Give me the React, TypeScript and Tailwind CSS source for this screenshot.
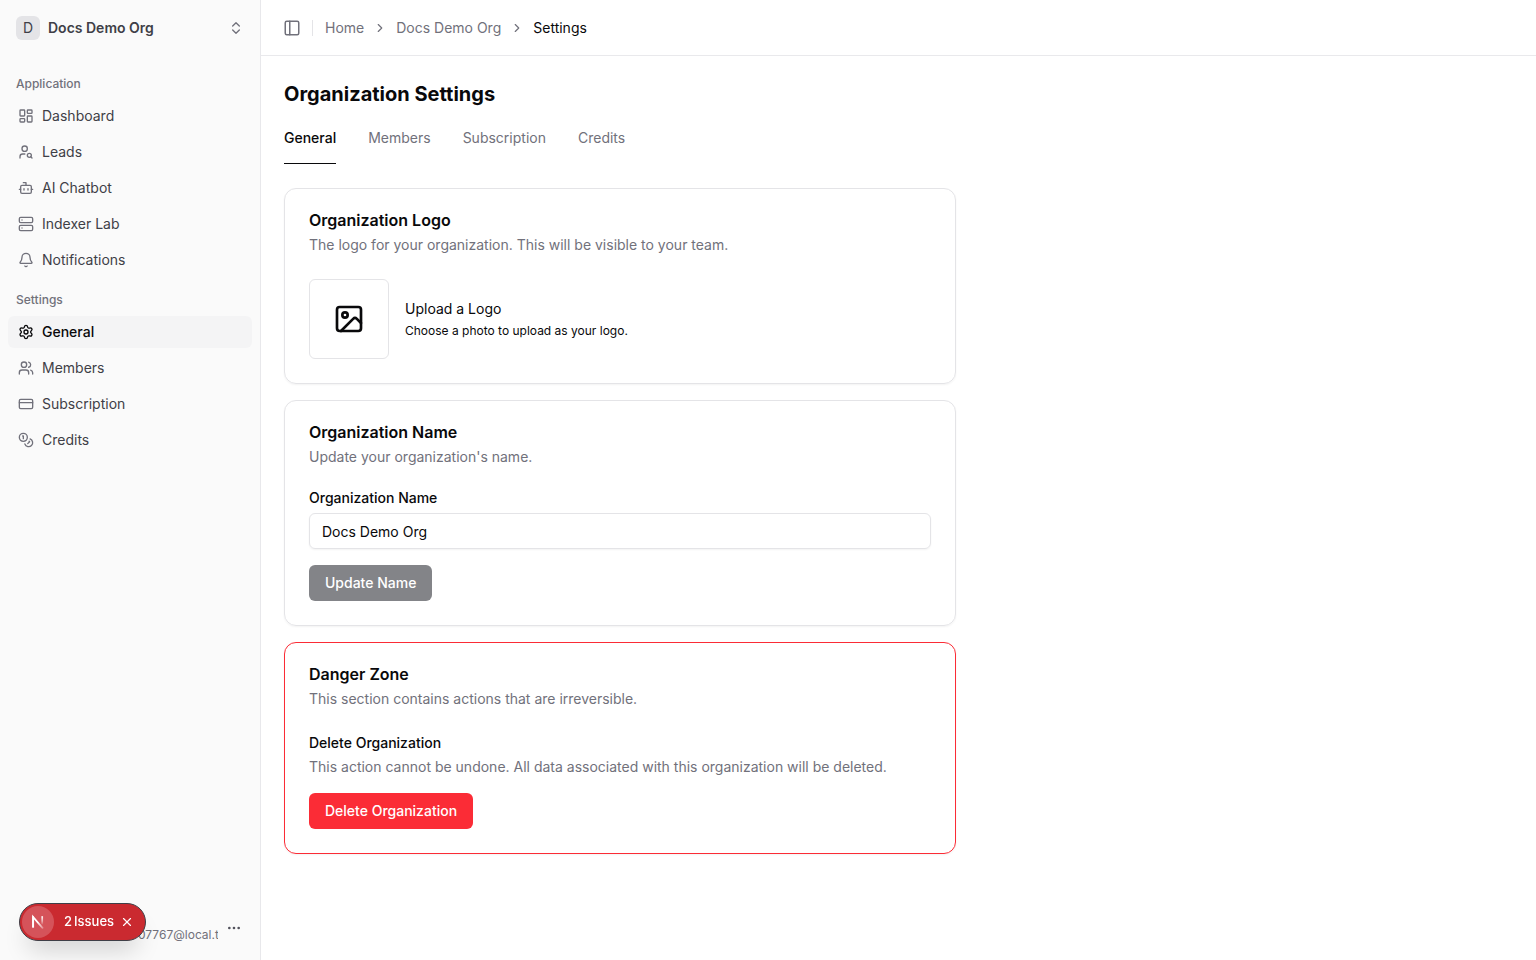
import {
    Bell,
    Bot,
    ChevronRight,
    ChevronsUpDown,
    Coins,
    CreditCard,
    Ellipsis,
    Image,
    LayoutDashboard,
    PanelLeft,
    Server,
    Settings,
    UserSearch,
    Users,
    X,
} from 'lucide-react';
import type { LucideIcon } from 'lucide-react';
import { useState } from 'react';
import type { ReactNode } from 'react';

type MenuItem = { label: string; icon: LucideIcon; active?: boolean };

const applicationItems: MenuItem[] = [
    { label: 'Dashboard', icon: LayoutDashboard },
    { label: 'Leads', icon: UserSearch },
    { label: 'AI Chatbot', icon: Bot },
    { label: 'Indexer Lab', icon: Server },
    { label: 'Notifications', icon: Bell },
];

const settingsItems: MenuItem[] = [
    { label: 'General', icon: Settings, active: true },
    { label: 'Members', icon: Users },
    { label: 'Subscription', icon: CreditCard },
    { label: 'Credits', icon: Coins },
];

const tabs = ['General', 'Members', 'Subscription', 'Credits'];

function MenuGroup({ title, items }: { title: string; items: MenuItem[] }) {
    return (
        <div>
            <div className="flex h-8 items-center px-2 text-xs font-medium text-zinc-500">{title}</div>
            <ul className="flex flex-col gap-1">
                {items.map(({ label, icon: Icon, active }) => (
                    <li key={label}>
                        <a
                            href="#"
                            className={
                                active
                                    ? 'flex h-8 items-center gap-2 rounded-md bg-zinc-100 px-2.5 text-sm font-medium text-zinc-950'
                                    : 'flex h-8 items-center gap-2 rounded-md px-2.5 text-sm text-zinc-700'
                            }
                        >
                            <Icon className={active ? 'size-4' : 'size-4 text-zinc-500'} />
                            <span>{label}</span>
                        </a>
                    </li>
                ))}
            </ul>
        </div>
    );
}

function Sidebar() {
    return (
        <aside className="flex w-[261px] shrink-0 flex-col border-r border-zinc-200/80 bg-[#fafafa]">
            <button type="button" className="flex h-14 items-center gap-2 px-4 text-left">
                <span className="flex size-6 items-center justify-center rounded-md bg-zinc-200 text-sm text-zinc-700">
                    D
                </span>
                <span className="flex-1 text-sm font-semibold text-zinc-700">Docs Demo Org</span>
                <ChevronsUpDown className="size-4 text-zinc-500" />
            </button>

            <nav className="flex flex-1 flex-col gap-2 px-2 pt-3">
                <MenuGroup title="Application" items={applicationItems} />
                <MenuGroup title="Settings" items={settingsItems} />
            </nav>

            <button type="button" aria-label="Account" className="flex h-16 items-center gap-2 px-[18px] text-zinc-600">
                <span className="flex flex-1 justify-end overflow-hidden pt-3.5">
                    <span className="w-20 overflow-hidden text-left text-xs whitespace-nowrap text-zinc-500">
                        07767@local.t
                    </span>
                </span>
                <Ellipsis className="size-4" />
            </button>
        </aside>
    );
}

function NextLogo() {
    return (
        <svg viewBox="0 0 16 16" fill="none" className="size-4">
            <defs>
                <linearGradient id="stem" x1="12" y1="2" x2="12" y2="11" gradientUnits="userSpaceOnUse">
                    <stop stopColor="white" />
                    <stop offset="0.6" stopColor="white" stopOpacity="0.5" />
                    <stop offset="1" stopColor="white" stopOpacity="0" />
                </linearGradient>
                <linearGradient id="slash" x1="8" y1="8" x2="14" y2="15" gradientUnits="userSpaceOnUse">
                    <stop stopColor="white" />
                    <stop offset="1" stopColor="white" stopOpacity="0.2" />
                </linearGradient>
            </defs>
            <path d="M3.1 13.5V3L13 14.5" stroke="url(#slash)" strokeWidth="1.9" />
            <path d="M3.1 13.5V2.2" stroke="white" strokeWidth="1.7" />
            <path d="M12.2 2.2v8.4" stroke="url(#stem)" strokeWidth="1.7" />
        </svg>
    );
}

function IssuesBadge() {
    const [open, setOpen] = useState(true);

    if (!open) return null;

    return (
        <div className="fixed bottom-[19px] left-[19px] flex h-[38px] items-center rounded-full border border-zinc-700 bg-[#ca2a30] p-0.5 pr-[11px] text-white shadow-[0_16px_24px_-8px_rgba(0,0,0,0.18)]">
            <span className="flex size-8 items-center justify-center rounded-full bg-[#d5535a]">
                <NextLogo />
            </span>
            <button type="button" className="flex gap-0.5 pl-2.5 text-[13px] font-medium">
                <span>2</span>
                <span>Issues</span>
            </button>
            <button type="button" aria-label="Dismiss" className="pl-1.5" onClick={() => setOpen(false)}>
                <X className="size-3.5" />
            </button>
        </div>
    );
}

function Card({
    title,
    description,
    danger,
    children,
}: {
    title: string;
    description: string;
    danger?: boolean;
    children: ReactNode;
}) {
    return (
        <section
            className={
                danger
                    ? 'rounded-xl border border-[#fb2c36] p-6 shadow-xs'
                    : 'rounded-xl border border-zinc-200 p-6 shadow-xs'
            }
        >
            <h2 className="text-base leading-[14px] font-semibold">{title}</h2>
            <p className="mt-2 text-sm text-zinc-500">{description}</p>
            <div className="mt-6">{children}</div>
        </section>
    );
}

function App() {
    const [name, setName] = useState('Docs Demo Org');

    return (
        <div className="flex min-h-screen bg-white font-[Inter,'Liberation_Sans',sans-serif] text-zinc-950">
            <Sidebar />

            <div className="min-w-0 flex-1">
                <header className="flex h-14 items-center border-b border-zinc-200/80 px-[22px]">
                    <button type="button" aria-label="Toggle sidebar" className="text-zinc-500">
                        <PanelLeft className="size-[18px]" />
                    </button>
                    <div className="mr-3 ml-[11px] h-4 w-px bg-zinc-200" />
                    <nav aria-label="Breadcrumb" className="flex items-center gap-[9px] text-sm text-zinc-500">
                        <a href="#">Home</a>
                        <ChevronRight className="size-3.5" />
                        <a href="#">Docs Demo Org</a>
                        <ChevronRight className="size-3.5" />
                        <span className="text-zinc-950">Settings</span>
                    </nav>
                </header>

                <main className="px-[23px] py-6">
                    <h1 className="text-xl leading-7 font-bold">Organization Settings</h1>
                    <nav aria-label="Settings" className="mt-1 flex gap-8 text-sm">
                        {tabs.map((tab, i) => (
                            <a
                                key={tab}
                                href="#"
                                className={
                                    i === 0
                                        ? 'flex h-[52px] items-center border-b border-zinc-950 font-medium'
                                        : 'flex h-[52px] items-center border-b border-transparent text-zinc-500'
                                }
                            >
                                {tab}
                            </a>
                        ))}
                    </nav>

                    <div className="mt-6 flex max-w-2xl flex-col gap-4">
                        <Card
                            title="Organization Logo"
                            description="The logo for your organization. This will be visible to your team."
                        >
                            <div className="flex items-center gap-4">
                                <button
                                    type="button"
                                    aria-label="Upload a logo"
                                    className="flex size-20 items-center justify-center rounded-md border border-zinc-200"
                                >
                                    <Image className="size-8" />
                                </button>
                                <div>
                                    <p className="text-sm">Upload a Logo</p>
                                    <p className="mt-1 text-xs">Choose a photo to upload as your logo.</p>
                                </div>
                            </div>
                        </Card>

                        <Card title="Organization Name" description="Update your organization's name.">
                            <form onSubmit={(e) => e.preventDefault()}>
                                <label htmlFor="name" className="block text-sm leading-[14px] font-medium">
                                    Organization Name
                                </label>
                                <input
                                    id="name"
                                    type="text"
                                    value={name}
                                    onChange={(e) => setName(e.target.value)}
                                    className="mt-2 block h-9 w-full rounded-md border border-zinc-200 px-3 text-sm shadow-xs"
                                />
                                <button
                                    type="submit"
                                    disabled={name === 'Docs Demo Org'}
                                    className="mt-4 h-9 rounded-md bg-zinc-950 px-4 text-sm font-medium text-white disabled:bg-[#838488]"
                                >
                                    Update Name
                                </button>
                            </form>
                        </Card>

                        <Card
                            danger
                            title="Danger Zone"
                            description="This section contains actions that are irreversible."
                        >
                            <h3 className="text-sm font-medium">Delete Organization</h3>
                            <p className="mt-1 text-sm text-zinc-500">
                                This action cannot be undone. All data associated with this organization will be
                                deleted.
                            </p>
                            <button
                                type="button"
                                className="mt-4 h-9 rounded-md bg-[#fb2c36] px-4 text-sm font-medium text-white"
                            >
                                Delete Organization
                            </button>
                        </Card>
                    </div>
                </main>
            </div>

            <IssuesBadge />
        </div>
    );
}

export default App;
